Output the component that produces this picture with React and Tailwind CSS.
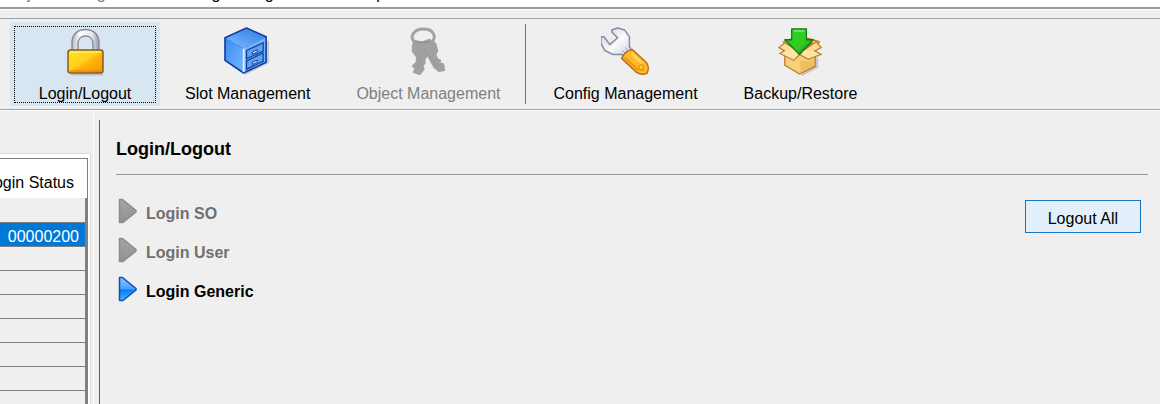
import React from "react";

function PadlockIcon() {
  return (
    <svg width="50" height="50" viewBox="0 0 50 50" aria-hidden="true">
      <defs>
        <linearGradient id="gold" x1="0" y1="0" x2="1" y2="1">
          <stop offset="0" stopColor="#ffe51c" />
          <stop offset="0.45" stopColor="#ffd21c" />
          <stop offset="0.55" stopColor="#ffb60b" />
          <stop offset="1" stopColor="#f99208" />
        </linearGradient>
        <linearGradient id="steel" x1="0" y1="0" x2="1" y2="0">
          <stop offset="0" stopColor="#b5b8c5" />
          <stop offset="0.3" stopColor="#ffffff" />
          <stop offset="0.75" stopColor="#e4e6ee" />
          <stop offset="1" stopColor="#9296a8" />
        </linearGradient>
      </defs>
      <path d="M12 26V16C12 7 18 2.500 25.500 2.500S39 7 39 16V26H33V17C33 12 30 9 25.500 9S18 12 18 17V26Z" fill="url(#steel)" stroke="#85889a" strokeWidth="1.400" />
      <path d="M11 47.500H43" stroke="#b9bfca" strokeWidth="2" />
      <rect x="8" y="23" width="35" height="23" rx="2.500" fill="url(#gold)" stroke="#8a5a20" strokeWidth="1.500" />
      <path d="M10 25H41" stroke="#fff07a" strokeWidth="1.200" />
      <path d="M10 44H41" stroke="#e87f08" strokeWidth="1.200" />
    </svg>
  );
}

function CabinetIcon() {
  return (
    <svg width="50" height="50" viewBox="1 0 51 51" aria-hidden="true">
      <defs>
        <linearGradient id="cabTop" x1="0" y1="1" x2="1" y2="0">
          <stop offset="0" stopColor="#7fc0ff" />
          <stop offset="1" stopColor="#2f78e6" />
        </linearGradient>
        <linearGradient id="cabSide" x1="0" y1="0" x2="1" y2="1">
          <stop offset="0" stopColor="#3f8cf2" />
          <stop offset="1" stopColor="#72b6ff" />
        </linearGradient>
      </defs>
      <path d="M23 48L47 36V14" fill="none" stroke="#c6c8d2" strokeWidth="2" />
      <path d="M25 1L45 10V36L22 47L3 34V11Z" fill="#2d76df" stroke="#153c9c" strokeWidth="1.600" strokeLinejoin="round" />
      <path d="M4 11.500L25 2L44 10.500L22 22Z" fill="url(#cabTop)" />
      <path d="M4 12L21 22V45L4 33.500Z" fill="url(#cabSide)" />
      <path d="M22 22L44 11V35.500L22 46Z" fill="#74b4fa" />
      <path d="M22 22V46" stroke="#d7efff" strokeWidth="2" />
      <path d="M25 24L42 16V24.500L25 32.500Z" fill="#5aa2f4" stroke="#173f9b" strokeWidth="1.300" />
      <path d="M25 34.500L42 26.500V35L25 43Z" fill="#5aa2f4" stroke="#173f9b" strokeWidth="1.300" />
      <path d="M31 25.500L36 23.200V25.500L31 27.800Z" fill="#d9efff" stroke="#173f9b" />
      <path d="M31 36L36 33.700V36L31 38.300Z" fill="#d9efff" stroke="#173f9b" />
    </svg>
  );
}

function KeysIcon() {
  return (
    <svg width="50" height="50" viewBox="1 0 51 51" aria-hidden="true">
      <path d="M13 16C7 10 12 2 22 2S36 10 30 16" fill="none" stroke="#a2a2a2" strokeWidth="3" />
      <path d="M13 14L20 16L28 13L34 17L36 24L34 28L36 33L39 34L38 37L42 38L43 44L38 45L33 41L26 28L23 33L23 37L21 39L22 43L18 48L12 46L14 42L11 40L15 36L15 30L11 25L11 19Z" fill="#a1a1a1" stroke="#a1a1a1" strokeWidth="2" strokeLinejoin="round" />
      <path d="M22 22L37 41M19 29L17 43" stroke="#9b9b9b" strokeWidth="1.500" />
      <path d="M15 16L29 15" stroke="#949494" strokeWidth="2" />
    </svg>
  );
}

function WrenchIcon() {
  return (
    <svg width="50" height="50" viewBox="1 0 51 51" aria-hidden="true">
      <defs>
        <linearGradient id="metal" x1="0" y1="0" x2="1" y2="1">
          <stop offset="0" stopColor="#c9ccda" />
          <stop offset="0.5" stopColor="#fafaff" />
          <stop offset="1" stopColor="#bfc3d3" />
        </linearGradient>
      </defs>
      <path d="M12 3L18 1L25 3L30 10V20L34 26L28 32L22 28L13 28L5 24L1 17V10L4 10L10 18L18 11L12 5Z" fill="url(#metal)" stroke="#858b9e" strokeWidth="1.500" strokeLinejoin="round" />
      <path d="M23 24L29 30M26 21L31 27" stroke="#999eae" />
      <path d="M22 32Q26 24 33 23L47 36Q51 41 48 47Q43 50 37 46Z" fill="#ffb92a" stroke="#b96e16" strokeWidth="1.500" />
      <path d="M25 31L38 43L45 44" fill="none" stroke="#f29b0d" strokeWidth="2.500" />
      <path d="M32 27L43 37" stroke="#ffd563" strokeWidth="2.500" />
      <circle cx="42" cy="41" r="2.500" fill="#ffc83a" stroke="#d98209" />
    </svg>
  );
}

function BoxIcon() {
  return (
    <svg width="50" height="50" viewBox="0 0 51 51" aria-hidden="true">
      <defs>
        <linearGradient id="green" x1="0" y1="0" x2="1" y2="1">
          <stop offset="0" stopColor="#23d423" />
          <stop offset="0.6" stopColor="#35ca22" />
          <stop offset="1" stopColor="#08860e" />
        </linearGradient>
      </defs>
      <path d="M26 49L42 41V31" fill="none" stroke="#c3c3ca" strokeWidth="2" />
      <path d="M8 15L24 9L44 15L40 25V40L24 48L9 39V24Z" fill="#f6ce78" stroke="#b67b2d" strokeWidth="1.400" />
      <path d="M10 18L24 12L40 17L25 26Z" fill="#ad7424" />
      <path d="M9 16L3 21L18 30L25 26Z" fill="#ffdc91" stroke="#bd832e" strokeWidth="1.300" />
      <path d="M41 15L46 21L31 29L25 26Z" fill="#ffdb90" stroke="#bd832e" strokeWidth="1.300" />
      <path d="M9 24L4 27L18 34L24 28L33 33L46 28L39 24" fill="#ffe4a5" stroke="#bd832e" strokeWidth="1.300" />
      <path d="M10 31L20 36L24 31L32 35L39 32V39L24 47L10 38Z" fill="#f8cf7b" />
      <path d="M25 34V47L39 39V33L33 35Z" fill="#eebd62" />
      <path d="M16 2H31V13H38L24 28L9 13H16Z" fill="url(#green)" stroke="#0b7d13" strokeWidth="1.300" strokeLinejoin="round" />
      <path d="M18 4H29" stroke="#7aed72" strokeWidth="1.500" />
    </svg>
  );
}

function Arrow({ disabled }) {
  return (
    <svg width="20" height="26" viewBox="0 0 20 26" aria-hidden="true">
      <defs>
        <linearGradient id="blueArrow" x1="0" y1="0" x2="0" y2="1">
          <stop offset="0" stopColor="#8cc4ff" />
          <stop offset="0.48" stopColor="#49a2ff" />
          <stop offset="0.55" stopColor="#087dfa" />
          <stop offset="1" stopColor="#49b3ff" />
        </linearGradient>
        <linearGradient id="grayArrow" x1="0" y1="0" x2="0" y2="1">
          <stop offset="0" stopColor="#a4a4a4" />
          <stop offset="1" stopColor="#929292" />
        </linearGradient>
      </defs>
      <path
        d="M1.500 1.500H4.500L18 12.500V14L5 24.500H1.500Z"
        fill={disabled ? "url(#grayArrow)" : "url(#blueArrow)"}
        stroke={disabled ? "#8b8b8b" : "#164cae"}
        strokeWidth="1.500"
        strokeLinejoin="round"
      />
    </svg>
  );
}

function ToolButton({ icon, label, active, disabled }) {
  return (
    <button
      type="button"
      disabled={disabled}
      className={
        "flex shrink-0 flex-col items-center pt-1 pb-[3px] " +
        (active ? "mr-0.5 w-[150px] bg-[#d8e6f2] px-1" : "px-[22px] disabled:text-[#808080]")
      }
    >
      <span
        className={
          "flex w-full flex-col items-center border border-dotted " +
          (active ? "border-black" : "border-transparent")
        }
      >
        {icon}
        <span className="mt-[9px] leading-4 whitespace-nowrap">{label}</span>
      </span>
    </button>
  );
}

function LoginAction({ label, disabled }) {
  return (
    <button
      type="button"
      disabled={disabled}
      className="flex items-start gap-2 font-bold disabled:text-[#707070]"
    >
      <Arrow disabled={disabled} />
      <span className="pt-1">{label}</span>
    </button>
  );
}

const slots = ["", "00000200", "", "", "", "", "", "", ""];

export default function App() {
  return (
    <div className="flex h-screen flex-col overflow-hidden bg-[#efefef] font-['Liberation_Sans',Arial,sans-serif] text-base text-black">
      <nav className="flex h-[9px] shrink-0 items-end gap-6 overflow-hidden border-b-2 border-[#999] bg-white px-1.5 pb-[3px] leading-5">
        <button type="button" disabled className="shrink-0 text-[#808080]">Object Management</button>
        <button type="button" className="shrink-0">Config Management</button>
        <button type="button" className="ml-2.5 shrink-0">Help</button>
      </nav>
      <div className="h-[9px] shrink-0 border-t border-white" />

      <header className="flex shrink-0 items-stretch border-y border-[#a0a0a0] py-[3px] pl-[10px]">
        <ToolButton icon={<PadlockIcon />} label="Login/Logout" active />
        <ToolButton icon={<CabinetIcon />} label="Slot Management" />
        <ToolButton icon={<KeysIcon />} label="Object Management" disabled />
        <div className="mr-1 ml-0.5 my-0.5 w-px shrink-0 bg-[#777]" />
        <ToolButton icon={<WrenchIcon />} label="Config Management" />
        <ToolButton icon={<BoxIcon />} label="Backup/Restore" />
      </header>

      <div className="flex min-h-0 flex-1 border-t border-white">
        <aside className="w-[91px] shrink-0 pt-[42px]">
          <div className="flex h-full justify-end overflow-hidden border-t border-r border-[#dcdcdc] bg-white pt-1 pr-0.5">
            <div className="shrink-0 border-t border-r border-[#808080]">
              <table className="w-[112px] border-collapse">
                <thead>
                  <tr className="h-[39px]">
                    <th scope="col" className="bg-white pt-2 pr-3 text-right font-normal whitespace-nowrap">
                      Login Status
                    </th>
                  </tr>
                </thead>
                <tbody>
                  {slots.map((slot, i) => (
                    <tr key={i} className={slot ? "bg-[#0078d7] text-white" : "bg-[#efefef]"}>
                      <td className="h-6 border-r-2 border-b border-[#808080] pt-1 pr-1.5 pb-0 text-right leading-[19px]">{slot}</td>
                    </tr>
                  ))}
                </tbody>
              </table>
            </div>
          </div>
        </aside>
        <div className="mr-[5px] ml-[2px] w-px shrink-0 bg-white" />

        <main className="mt-[9px] min-w-0 flex-1 border-l border-[#606060] pr-3 pl-4">
          <h1 className="border-b border-[#999] pt-[17px] pb-[13px] text-lg leading-6 font-bold">Login/Logout</h1>
          <div className="flex items-start justify-between pt-[23px] pr-[7px] pl-0.5">
            <div className="flex flex-col gap-[11px]">
              <LoginAction label="Login SO" disabled />
              <LoginAction label="Login User" disabled />
              <LoginAction label="Login Generic" />
            </div>
            <button type="button" className="mt-0.5 border border-[#1874bd] bg-[#e3effa] px-[22px] pt-1 leading-[27px]">
              Logout All
            </button>
          </div>
        </main>
      </div>
    </div>
  );
}
